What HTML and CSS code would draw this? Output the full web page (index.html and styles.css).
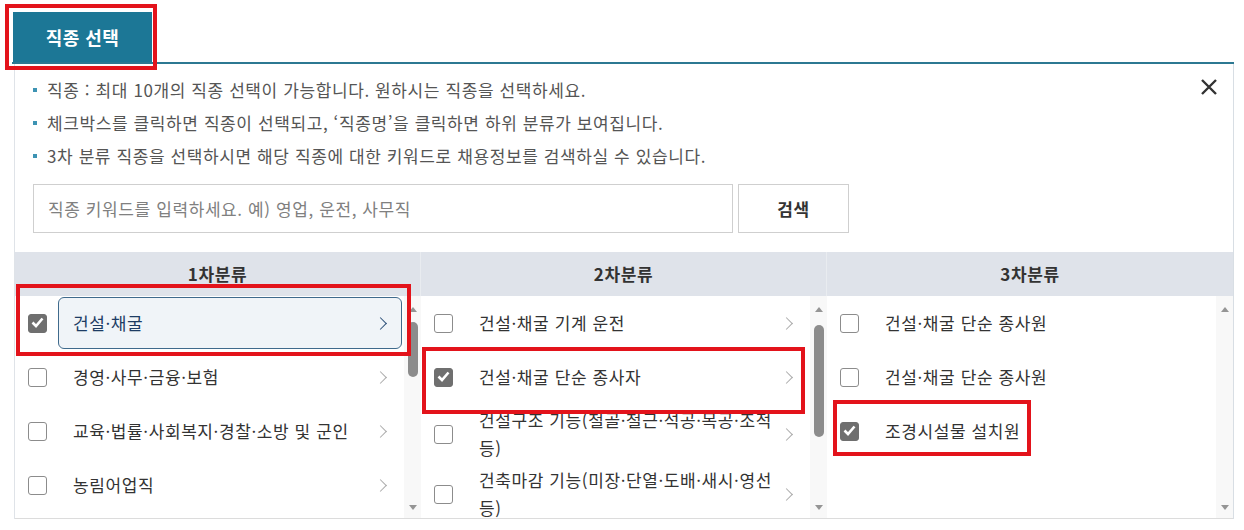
FILE: index.html
```html
<!DOCTYPE html>
<html lang="ko">
<head>
    <meta charset="UTF-8">
    <meta name="viewport" content="width=device-width, initial-scale=1.0">
    <title>직종 선택</title>
    <link rel="stylesheet" href="styles.css">
</head>
<body>

    <div class="wrap">
        <div class="tabs">
            <button type="button" class="tab">직종 선택</button>
        </div>

        <div class="panel">
            <div class="guide-row">
                <ul class="guide">
                    <li>직종 : 최대 10개의 직종 선택이 가능합니다. 원하시는 직종을 선택하세요.</li>
                    <li>체크박스를 클릭하면 직종이 선택되고, ‘직종명’을 클릭하면 하위 분류가 보여집니다.</li>
                    <li>3차 분류 직종을 선택하시면 해당 직종에 대한 키워드로 채용정보를 검색하실 수 있습니다.</li>
                </ul>
                <button type="button" class="close" aria-label="닫기">
                    <svg width="20" height="20" viewBox="0 0 20 20"><path d="M3 3L17 17M17 3L3 17" stroke="#333" stroke-width="2.4" fill="none"/></svg>
                </button>
            </div>

            <div class="search">
                <input type="text" placeholder="직종 키워드를 입력하세요. 예) 영업, 운전, 사무직">
                <button type="button">검색</button>
            </div>

            <div class="cats">
                <!-- 1차분류 -->
                <div class="cat-col">
                    <div class="cat-head">1차분류</div>
                    <div class="cat-body">
                        <ul class="cat-list">
                            <li class="row">
                                <span class="chk on"><svg width="19" height="19" viewBox="0 0 19 19"><path d="M4.5 9.5L8 13L14.5 5.5" stroke="#fff" stroke-width="2.6" fill="none"/></svg></span>
                                <span class="item active">건설·채굴<i class="arr"></i></span>
                            </li>
                            <li class="row">
                                <span class="chk"></span>
                                <span class="item">경영·사무·금융·보험<i class="arr"></i></span>
                            </li>
                            <li class="row">
                                <span class="chk"></span>
                                <span class="item">교육·법률·사회복지·경찰·소방 및 군인<i class="arr"></i></span>
                            </li>
                            <li class="row">
                                <span class="chk"></span>
                                <span class="item">농림어업직<i class="arr"></i></span>
                            </li>
                        </ul>
                        <div class="sbar">
                            <span class="up"></span>
                            <span class="thumb t1"></span>
                            <span class="fill"></span>
                            <span class="down"></span>
                        </div>
                    </div>
                </div>

                <!-- 2차분류 -->
                <div class="cat-col">
                    <div class="cat-head">2차분류</div>
                    <div class="cat-body">
                        <ul class="cat-list">
                            <li class="row">
                                <span class="chk"></span>
                                <span class="item">건설·채굴 기계 운전<i class="arr"></i></span>
                            </li>
                            <li class="row">
                                <span class="chk on"><svg width="19" height="19" viewBox="0 0 19 19"><path d="M4.5 9.5L8 13L14.5 5.5" stroke="#fff" stroke-width="2.6" fill="none"/></svg></span>
                                <span class="item">건설·채굴 단순 종사자<i class="arr"></i></span>
                            </li>
                            <li class="row">
                                <span class="chk"></span>
                                <span class="item"><span class="txt">건설구조 기능(철골·철근·석공·목공·조적 등)</span><i class="arr"></i></span>
                            </li>
                            <li class="row">
                                <span class="chk"></span>
                                <span class="item"><span class="txt">건축마감 기능(미장·단열·도배·새시·영선 등)</span><i class="arr"></i></span>
                            </li>
                        </ul>
                        <div class="sbar">
                            <span class="up"></span>
                            <span class="thumb t2"></span>
                            <span class="fill"></span>
                            <span class="down"></span>
                        </div>
                    </div>
                </div>

                <!-- 3차분류 -->
                <div class="cat-col">
                    <div class="cat-head">3차분류</div>
                    <div class="cat-body">
                        <ul class="cat-list">
                            <li class="row">
                                <span class="chk"></span>
                                <span class="item">건설·채굴 단순 종사원</span>
                            </li>
                            <li class="row">
                                <span class="chk"></span>
                                <span class="item">건설·채굴 단순 종사원</span>
                            </li>
                            <li class="row">
                                <span class="chk on"><svg width="19" height="19" viewBox="0 0 19 19"><path d="M4.5 9.5L8 13L14.5 5.5" stroke="#fff" stroke-width="2.6" fill="none"/></svg></span>
                                <span class="item">조경시설물 설치원</span>
                            </li>
                        </ul>
                        <div class="sbar">
                            <span class="up"></span>
                            <span class="fill"></span>
                            <span class="down"></span>
                        </div>
                    </div>
                </div>
            </div>
        </div>

        <!-- 표시용 빨간 박스 -->
        <div class="mark m-tab"></div>
        <div class="mark m-1"></div>
        <div class="mark m-2"></div>
        <div class="mark m-3"></div>
    </div>

</body>
</html>
```

FILE: styles.css
```css
body {
    margin: 0;
    font-family: "Noto Sans CJK KR", "Noto Sans", sans-serif;
    font-size: 17px;
    letter-spacing: 0.6px;
    color: #333;
    background: #fff;
}
ul {
    margin: 0;
    padding: 0;
    list-style: none;
}
button, input {
    font-family: inherit;
    font-size: inherit;
    letter-spacing: inherit;
}
.wrap {
    position: relative;
    width: 1244px;
    height: 530px;
    overflow: hidden;
}

/* 탭 */
.tabs {
    display: flex;
    margin: 0 10px 0 12px;
    padding-top: 12px;
    border-bottom: 2px solid #2c7892;
}
.tab {
    width: 140px;
    height: 50px;
    border: none;
    border-left: 1px solid #fff;
    background-color: #1c7796;
    color: #fff;
    font-size: 18px;
    font-weight: 700;
    letter-spacing: 0.4px;
    cursor: pointer;
}

/* 패널 */
.panel {
    margin: 0 10px 0 14px;
    border-left: 1px solid #dfe3e8;
    border-right: 1px solid #d8dee4;
}
.guide-row {
    display: flex;
}
.guide {
    flex: 1;
    padding: 9px 0 0 18px;
}
.guide li {
    display: flex;
    align-items: center;
    line-height: 33px;
    color: #555;
}
.guide li::before {
    content: "";
    width: 4px;
    height: 4px;
    margin-right: 10px;
    background-color: #3d93b3;
}
.close {
    width: 24px;
    height: 24px;
    margin: 11px 12px 0 0;
    padding: 0;
    border: none;
    background: none;
    display: flex;
    align-items: center;
    justify-content: center;
    cursor: pointer;
}

.search {
    display: flex;
    gap: 5px;
    margin: 12px 0 0 18px;
}
.search input {
    width: 700px;
    height: 49px;
    box-sizing: border-box;
    padding: 0 14px;
    border: 1px solid #cfcfcf;
    color: #333;
}
.search input::placeholder {
    color: #808080;
}
.search button {
    width: 111px;
    height: 49px;
    border: 1px solid #cfcfcf;
    background-color: #fff;
    color: #333;
    font-weight: 700;
    cursor: pointer;
}

/* 분류 */
.cats {
    display: grid;
    grid-template-columns: 406px 406px 1fr;
    margin-top: 19px;
    border-bottom: 1px solid #dcdcdc;
}
.cat-head {
    height: 44px;
    line-height: 44px;
    text-align: center;
    background-color: #dfe3ea;
    border-right: 1px solid #e9ecf0;
    font-weight: 700;
    color: #333;
}
.cat-col:last-child .cat-head {
    border-right: none;
}
.cat-body {
    display: flex;
    height: 222px;
    overflow: hidden;
}
.cat-list {
    flex: 1;
    min-width: 0;
}
.row {
    display: flex;
    align-items: center;
    padding: 1px 0 1px 13px;
}
.chk {
    flex: none;
    width: 19px;
    height: 19px;
    box-sizing: border-box;
    border: 1.5px solid #8c8c8c;
    border-radius: 3px;
    background-color: #fff;
}
.chk.on {
    border-color: #6f6f6f;
    background-color: #6f6f6f;
}
.chk svg {
    display: block;
    margin: -1.5px;
}
.item {
    flex: 1;
    display: flex;
    align-items: center;
    justify-content: space-between;
    gap: 6px;
    min-height: 52px;
    box-sizing: border-box;
    margin: 0 2px 0 11px;
    padding: 0 12px 0 14px;
    border: 1px solid transparent;
    line-height: 28px;
    color: #333;
    cursor: pointer;
}
.item.active {
    border-color: #3f6a8c;
    border-radius: 6px;
    background-color: #f0f4f8;
    color: #1d3c64;
}
.arr {
    flex: none;
    width: 8px;
    height: 8px;
    margin-right: 4px;
    border-top: 1.5px solid #aaa;
    border-right: 1.5px solid #aaa;
    transform: rotate(45deg);
}
.item.active .arr {
    border-color: #2b4f78;
}

/* 스크롤바 */
.sbar {
    flex: none;
    width: 17px;
    display: flex;
    flex-direction: column;
    align-items: center;
    padding: 11px 0 8px;
    box-sizing: border-box;
    background-color: #f8f8f8;
}
.up, .down {
    width: 0;
    height: 0;
    border-left: 4.5px solid transparent;
    border-right: 4.5px solid transparent;
}
.up {
    border-bottom: 5px solid #959595;
}
.down {
    border-top: 5px solid #959595;
}
.thumb {
    width: 10px;
    margin-top: 10px;
    border-radius: 5px;
    background-color: #8c8c8c;
}
.t1 {
    height: 55px;
}
.t2 {
    height: 112px;
    margin-top: 13px;
}
.fill {
    flex: 1;
}

/* 빨간 표시 박스 */
.mark {
    position: absolute;
    border: 4px solid #e3131b;
    box-sizing: border-box;
    pointer-events: none;
}
.m-tab { left: 5px; top: 4px; width: 152px; height: 66px; }
.m-1 { left: 16px; top: 284px; width: 395px; height: 72px; }
.m-2 { left: 422px; top: 347px; width: 383px; height: 67px; }
.m-3 { left: 833px; top: 400px; width: 198px; height: 56px; }
```
